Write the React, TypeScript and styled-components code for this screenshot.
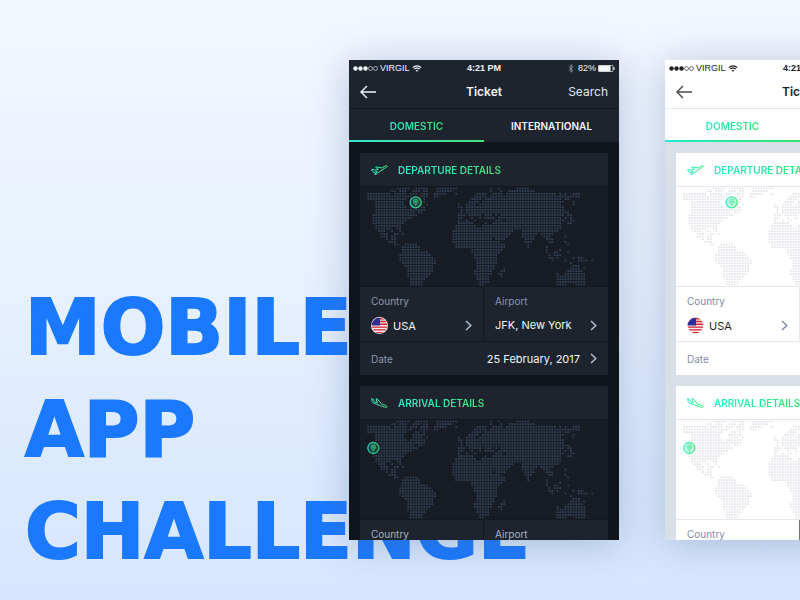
import React, { useId } from "react";
import styled, { createGlobalStyle, ThemeProvider } from "styled-components";

const GlobalStyle = createGlobalStyle`
  * { box-sizing: border-box; }
  body { margin: 0; font-family: Inter, "Noto Sans", sans-serif; }
  button { font: inherit; color: inherit; background: none; border: 0; padding: 0; margin: 0; cursor: pointer; text-align: left; }
  h1, h2, p { margin: 0; }
`;

const dark = {
  bar: "#1d242e",
  body: "#10141b",
  map: "#181c25",
  line: "#141920",
  divider: "#141920",
  lateDivider: "#141920",
  text: "#f4f6f9",
  nav: "#e4e8ee",
  back: "#f4f6f9",
  label: "#8e97aa",
  lateLabel: "#a9b2c2",
  chevron: "#b9c4d6",
  dot: "#33445a",
  marker: "#16483f",
  from: "#35e6cd",
  to: "#46e07c",
};

const light: typeof dark = {
  bar: "#ffffff",
  body: "#d9dfe6",
  map: "#ffffff",
  line: "#e4e7ef",
  divider: "#e4e7ef",
  lateDivider: "#6f7278",
  text: "#1c1d21",
  nav: "#1c1d21",
  back: "#4a4a50",
  label: "#818ba2",
  lateLabel: "#818ba2",
  chevron: "#7d8aa8",
  dot: "#dfe2e8",
  marker: "#c4f7e1",
  from: "#20eec8",
  to: "#30e46c",
};

type Palette = typeof dark;
declare module "styled-components" {
  export interface DefaultTheme extends Palette {}
}

const Stage = styled.main`
  display: grid;
  grid-template-columns: minmax(0, 1fr) 451px;
  min-height: 100vh;
  overflow: hidden;
  background: linear-gradient(180deg, #f3f7ff 0%, #e8f1ff 45%, #dceafe 78%, #d7e6fe 100%);
`;

const Headline = styled.h1`
  align-self: end;
  padding: 0 0 17px 25px;
  font-family: "DejaVu Sans", sans-serif;
  font-size: 76px;
  line-height: 102px;
  font-weight: 700;
  color: #1a79ff;
  -webkit-text-stroke: 2px #1a79ff;
  white-space: nowrap;
  span { display: block; }
`;

const Phones = styled.div`
  position: relative;
  z-index: 1;
  display: flex;
  gap: 46px;
  padding: 60px 0;
`;

const Screen = styled.section`
  flex: 0 0 270px;
  height: calc(100vh - 120px);
  overflow: hidden;
  background: ${(p) => p.theme.body};
  color: ${(p) => p.theme.text};
  box-shadow: 0 4px 36px rgba(70, 100, 145, 0.34);
`;

const StatusBar = styled.div`
  display: grid;
  grid-template-columns: 1fr auto 1fr;
  align-items: center;
  height: 16px;
  padding: 0 4px;
  background: ${(p) => p.theme.bar};
  font-family: "Liberation Sans", sans-serif;
  font-size: 9px;
  line-height: 16px;
`;

const StatusGroup = styled.div<{ $end?: boolean }>`
  display: flex;
  align-items: center;
  gap: 2px;
  justify-content: ${(p) => (p.$end ? "flex-end" : "flex-start")};
  svg { display: block; }
`;

const Clock = styled.span`
  font-weight: 700;
`;

const NavBar = styled.header`
  display: grid;
  grid-template-columns: 1fr auto 1fr;
  align-items: center;
  height: 33px;
  padding: 0 11px;
  background: ${(p) => p.theme.bar};
  border-bottom: 1px solid ${(p) => p.theme.line};
`;

const BackButton = styled.button`
  color: ${(p) => p.theme.back};
  svg { display: block; }
`;

const NavTitle = styled.h2`
  font-size: 12px;
  line-height: 20px;
  font-weight: 600;
`;

const SearchButton = styled.button`
  justify-self: end;
  color: ${(p) => p.theme.nav};
  font-size: 12px;
  line-height: 20px;
`;

const Tabs = styled.div`
  display: flex;
  height: 33px;
  background: ${(p) => p.theme.bar};
`;

const GradientText = styled.span`
  background: linear-gradient(90deg, ${(p) => p.theme.from}, ${(p) => p.theme.to});
  background-clip: text;
  -webkit-background-clip: text;
  color: transparent;
`;

const Tab = styled.button<{ $active?: boolean }>`
  flex: 1;
  height: 33px;
  text-align: center;
  font-size: 10px;
  line-height: 16px;
  font-weight: 600;
  background: linear-gradient(90deg, ${(p) => p.theme.from}, ${(p) => p.theme.to}) no-repeat left bottom;
  background-size: 100% ${(p) => (p.$active ? 2 : 0)}px;
`;

const Content = styled.div`
  display: flex;
  flex-direction: column;
  gap: 11px;
  padding: 11px;
`;

const Card = styled.article`
  background: ${(p) => p.theme.bar};
`;

const CardHeader = styled.div`
  display: flex;
  align-items: center;
  gap: 10px;
  height: 33px;
  padding: 0 11px;
  svg { display: block; }
`;

const CardTitle = styled.h2`
  font-size: 10px;
  line-height: 16px;
  font-weight: 600;
`;

const MapArea = styled.div`
  height: 101px;
  background: ${(p) => p.theme.map};
  border: solid ${(p) => p.theme.line};
  border-width: 1px 0;
  svg { display: block; width: 100%; height: 99px; }
`;

const FieldRow = styled.div`
  display: grid;
  grid-template-columns: 1fr 1fr;
`;

const Field = styled.button<{ $late?: boolean }>`
  display: flex;
  flex-direction: column;
  justify-content: flex-start;
  gap: 8px;
  height: 54px;
  padding: 6px 11px 0;
  &:first-child {
    border-right: 1px solid ${(p) => (p.$late ? p.theme.lateDivider : p.theme.divider)};
  }
`;

const FieldLabel = styled.span<{ $late?: boolean }>`
  font-size: 10px;
  line-height: 16px;
  color: ${(p) => (p.$late ? p.theme.lateLabel : p.theme.label)};
`;

const FieldValue = styled.span`
  display: flex;
  align-items: center;
  gap: 5px;
  width: 100%;
  font-size: 11px;
  line-height: 16px;
  white-space: nowrap;
  svg { display: block; flex: none; }
  svg:last-child { margin-left: auto; color: ${(p) => p.theme.chevron}; }
`;

const DateButton = styled.button`
  display: flex;
  align-items: center;
  justify-content: space-between;
  width: 100%;
  height: 34px;
  padding: 0 11px;
  border-top: 1px solid ${(p) => p.theme.line};
`;

const DateValue = styled.span`
  display: flex;
  align-items: center;
  gap: 10px;
  font-size: 11px;
  line-height: 16px;
  svg { display: block; color: ${(p) => p.theme.chevron}; }
`;

/* Inclusive column runs of land for each row of the dotted map. */
const LAND = [
  "11-15 18-22 26-33 46 49 56-60",
  "9-10 12-14 17-19 21-22 26-31 46 50 53-62",
  "0-8 10-14 16-18 20-22 25-29 33 41-44 47-50 52-70 72 74 77-79",
  "0-16 20-22 25-26 40-44 46-75 76-79",
  "0-14 18-19 21 39-42 44-72 74-75",
  "3-13 17-21 38-41 43-73 77",
  "3-13 17-20 22 34 37-40 42-72 77",
  "3-14 16-21 34-35 37-73",
  "3-21 35 37-73",
  "3-17 19-20 35 37-75",
  "2-18 34-36 38-42 44-46 48 50-73 75-76",
  "2-16 34-35 39 42 44-47 49-72 74 76",
  "2-14 34 37 40 48-50 52-73 76-77",
  "2-13 34-39 44 47-72 75-76",
  "3-12 33-40 43-72",
  "3-8 11-12 33-72",
  "4-6 9 12 32-54 58-71",
  "5-7 10-11 13 32-53 58-63 65-69",
  "5-7 9-10 32-52 58-62 66-68 74",
  "7 9-10 32-46 48-51 59-62 67-69",
  "8-10 32-46 47-49 59-61 68-69 74",
  "10-11 14-18 33-51 60 75",
  "13-19 33-51 60 67",
  "13-19 39-50 67 72",
  "13-22 39-49 67 70-71 75",
  "12-23 40-48 68 70-72",
  "12-24 40-48 68-69 71 77 79-80",
  "12-25 41-48 69 74 79-82 84",
  "13-25 41-48 76",
  "14-24 41-47 77-79",
  "15-24 41-47 51 76-79 81",
  "15-24 40-46 50-51 75-80",
  "15-23 40-46 49-50 71 74-81",
  "15-22 41-45 50 71-81",
  "16-21 41-45 71-81",
  "16-20 42-45 71-81",
  "16-20 42-43 71-74 78-81",
];

const landPath = LAND.map((row, r) =>
  row
    .split(" ")
    .map((run) => {
      const [a, b = a] = run.split("-").map(Number);
      let d = "";
      for (let c = a; c <= b; c++) d += `M${22 + c * 8} ${2 + r * 8}h5v5h-5z`;
      return d;
    })
    .join("")
).join("");

const LandDots = styled.path`
  fill: ${(p) => p.theme.dot};
`;
const MarkerDisc = styled.circle`
  fill: ${(p) => p.theme.marker};
  stroke: ${(p) => p.theme.map};
`;
const StopFrom = styled.stop`
  stop-color: ${(p) => p.theme.from};
`;
const StopTo = styled.stop`
  stop-color: ${(p) => p.theme.to};
`;

function WorldMap({ x, y }: { x: number; y: number }) {
  const id = useId();
  return (
    <svg viewBox="0 0 744 297" preserveAspectRatio="xMidYMin meet" aria-hidden="true">
      <defs>
        <linearGradient id={id}>
          <StopFrom offset="0" />
          <StopTo offset="1" />
        </linearGradient>
      </defs>
      <LandDots d={landPath} />
      <g transform={`translate(${x} ${y})`} opacity="0.85">
        <MarkerDisc r="20" strokeWidth="4" />
        <circle r="16.500" fill="none" stroke={`url(#${id})`} strokeWidth="4" />
        <path
          d="M0 10c-2-5-7-8-7-13a7 7 0 0 1 14 0c0 5-5 8-7 13z"
          fill={`url(#${id})`}
          fillOpacity="0.45"
          stroke={`url(#${id})`}
          strokeWidth="2"
        />
        <circle cy="-3" r="2" fill={`url(#${id})`} />
      </g>
    </svg>
  );
}

function PlaneIcon({ landing }: { landing?: boolean }) {
  const id = useId();
  return (
    <svg width="17" height="10" viewBox="0 0 51 30" fill="none" aria-hidden="true">
      <defs>
        <linearGradient id={id}>
          <StopFrom offset="0" />
          <StopTo offset="1" />
        </linearGradient>
      </defs>
      <path
        stroke={`url(#${id})`}
        strokeWidth="3"
        strokeLinejoin="round"
        d={
          landing
            ? "M2 2l5 2 3 7 9 4L15 2l4 1 13 15 11 4c5 2 6 4 5 5-1 2-5 1-8 0L9 16C5 14 4 12 3 9z"
            : "M2 14l4-1 6 3 10-3L14 7l5-1 14 3 10-6c3-2 7-1 6 1-1 3-5 4-8 6L30 17 15 28l-4 0 8-9-8 3c-3 1-5 0-6-2z"
        }
      />
    </svg>
  );
}

const Chevron = () => (
  <svg width="7" height="11" viewBox="0 0 7 11" fill="none" stroke="currentColor" strokeWidth="1.400" aria-hidden="true">
    <path d="M1 1L5.800 5.500L1 10" />
  </svg>
);

function Flag() {
  const id = useId();
  return (
    <svg width="17" height="17" viewBox="0 0 17 17" aria-hidden="true">
      <clipPath id={id}>
        <circle cx="8.500" cy="8.500" r="7.800" />
      </clipPath>
      <circle cx="8.500" cy="8.500" r="8.500" fill="#f1efef" />
      <g clipPath={`url(#${id})`}>
        <path d="M0 1.700h17M0 4.500h17M0 7.300h17M0 10.100h17M0 12.900h17M0 15.700h17" stroke="#d6202c" strokeWidth="1.400" />
        <path d="M0 0h9v8.500H0z" fill="#2c2f97" />
      </g>
    </svg>
  );
}

const SignalDots = () => (
  <svg width="25" height="5" viewBox="0 0 25 5" fill="currentColor" aria-hidden="true">
    <circle cx="2.500" cy="2.500" r="2.200" />
    <circle cx="7.500" cy="2.500" r="2.200" />
    <circle cx="12.500" cy="2.500" r="2.200" />
    <g fill="none" stroke="currentColor" strokeWidth="0.600">
      <circle cx="17.500" cy="2.500" r="2" />
      <circle cx="22.500" cy="2.500" r="2" />
    </g>
  </svg>
);

const Wifi = () => (
  <svg width="10" height="7" viewBox="0 0 10 7" fill="none" stroke="currentColor" strokeWidth="1.200" aria-hidden="true">
    <path d="M0.800 2.600c2.400-2.300 6-2.300 8.400 0M2.300 4.200c1.500-1.500 3.900-1.500 5.400 0" />
    <path d="M5 6.800L3.600 5.400c.8-.7 2-.7 2.800 0z" fill="currentColor" stroke="none" />
  </svg>
);

const Bluetooth = () => (
  <svg width="8" height="9" viewBox="0 0 8 9" fill="none" stroke="currentColor" strokeWidth="0.800" opacity="0.600" aria-hidden="true">
    <path d="M0.800 2.400l4.200 4L3 8.300V.7l2 1.900-4.200 4" />
  </svg>
);

const Battery = () => (
  <svg width="17" height="7" viewBox="0 0 17 7" fill="none" stroke="currentColor" strokeWidth="0.700" aria-hidden="true">
    <rect x="0.400" y="0.400" width="14.600" height="6.200" rx="1" />
    <rect x="0.500" y="0.500" width="12" height="6" fill="currentColor" stroke="none" />
    <path d="M16 2.300v2.400" strokeWidth="1.200" />
  </svg>
);

function DetailsCard({ title, landing, marker }: { title: string; landing?: boolean; marker: [number, number] }) {
  return (
    <Card>
      <CardHeader>
        <PlaneIcon landing={landing} />
        <CardTitle>
          <GradientText>{title}</GradientText>
        </CardTitle>
      </CardHeader>
      <MapArea>
        <WorldMap x={marker[0]} y={marker[1]} />
      </MapArea>
      <FieldRow>
        <Field type="button" $late={landing}>
          <FieldLabel $late={landing}>Country</FieldLabel>
          <FieldValue>
            <Flag />
            USA
            <Chevron />
          </FieldValue>
        </Field>
        <Field type="button">
          <FieldLabel $late={landing}>Airport</FieldLabel>
          <FieldValue>
            JFK, New York
            <Chevron />
          </FieldValue>
        </Field>
      </FieldRow>
      <DateButton type="button">
        <FieldLabel>Date</FieldLabel>
        <DateValue>
          25 February, 2017
          <Chevron />
        </DateValue>
      </DateButton>
    </Card>
  );
}

function TicketScreen({ palette }: { palette: Palette }) {
  return (
    <ThemeProvider theme={palette}>
      <Screen>
        <StatusBar>
          <StatusGroup>
            <SignalDots />
            <span>VIRGIL</span>
            <Wifi />
          </StatusGroup>
          <Clock>4:21 PM</Clock>
          <StatusGroup $end>
            <Bluetooth />
            <span>82%</span>
            <Battery />
          </StatusGroup>
        </StatusBar>
        <NavBar>
          <BackButton type="button" aria-label="Back">
            <svg width="16" height="14" viewBox="0 0 16 14" fill="none" stroke="currentColor" strokeWidth="1.400">
              <path d="M7 1L1 7l6 6M1 7h15" />
            </svg>
          </BackButton>
          <NavTitle>Ticket</NavTitle>
          <SearchButton type="button">Search</SearchButton>
        </NavBar>
        <Tabs role="tablist">
          <Tab type="button" role="tab" aria-selected="true" $active>
            <GradientText>DOMESTIC</GradientText>
          </Tab>
          <Tab type="button" role="tab" aria-selected="false">
            INTERNATIONAL
          </Tab>
        </Tabs>
        <Content>
          <DetailsCard title="DEPARTURE DETAILS" marker={[167, 46]} />
          <DetailsCard title="ARRIVAL DETAILS" landing marker={[40, 84]} />
        </Content>
      </Screen>
    </ThemeProvider>
  );
}

export default function App() {
  return (
    <>
      <GlobalStyle />
      <Stage>
        <Headline>
          <span>MOBILE</span>
          <span>APP</span>
          <span>CHALLENGE</span>
        </Headline>
        <Phones>
          <TicketScreen palette={dark} />
          <TicketScreen palette={light} />
        </Phones>
      </Stage>
    </>
  );
}
